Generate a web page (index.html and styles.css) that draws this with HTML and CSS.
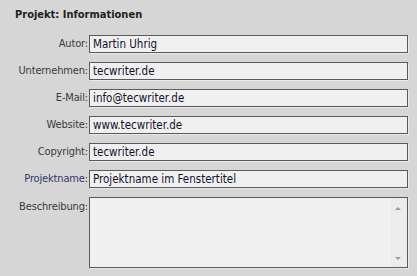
FILE: index.html
```html
<!DOCTYPE html>
<html>
<head>
  <title>Projekt: Informationen</title>
  <meta charset="UTF-8" />
  <meta name="viewport" content="width=device-width, initial-scale=1.0" />
  <link rel="stylesheet" href="styles.css">
</head>
<body>

  <div class="panel">
    <h1 class="title">Projekt: Informationen</h1>

    <!-- Project info fields -->
    <div class="fields">
      <label for="autor">Autor:</label>
      <input type="text" id="autor" value="Martin Uhrig">

      <label for="firma">Unternehmen:</label>
      <input type="text" id="firma" value="tecwriter.de">

      <label for="mail">E-Mail:</label>
      <input type="text" id="mail" value="info@tecwriter.de">

      <label for="web">Website:</label>
      <input type="text" id="web" value="www.tecwriter.de">

      <label for="copy">Copyright:</label>
      <input type="text" id="copy" value="tecwriter.de">

      <label for="pname" class="link">Projektname:</label>
      <input type="text" id="pname" value="Projektname im Fenstertitel">

      <label for="desc" class="top">Beschreibung:</label>
      <div class="area">
        <textarea id="desc"></textarea>
        <!-- fake scrollbar like the old windows one -->
        <div class="scroll">
          <span class="arrow up"></span>
          <span class="arrow down"></span>
        </div>
      </div>
    </div>
  </div>

</body>
</html>
```

FILE: styles.css
```css
html, body {
  margin: 0;
  background: #d6d6d6;
}
.panel {
  width: 417px;
  height: 276px;
  box-sizing: border-box;
  padding: 8px 0 0 0;
  font-family: 'DejaVu Sans Condensed', 'DejaVu Sans', sans-serif;
  font-stretch: condensed;
  font-size: 11px;
}
.title {
  margin: 0 0 13px 15px;
  font-size: 11px;
  line-height: 14px;
  font-weight: bold;
  color: #222;
}
.fields {
  display: grid;
  grid-template-columns: 88px 319px;
  column-gap: 1px;
  row-gap: 9px;
  align-items: center;
}
.fields label {
  text-align: right;
  color: #3a3a3a;
  line-height: 18px;
  letter-spacing: -0.15px;
}
.fields label.link {
  color: #33386a;
}
.fields label.top {
  align-self: start;
  line-height: 14px;
  margin-top: 3px;
}
input, textarea {
  height: 18px;
  margin: 0;
  padding: 0 3px;
  border: 1px solid #5a5a5a;
  border-radius: 0;
  background: #f0f0f0;
  box-sizing: border-box;
  box-shadow: 1px 1px 0 #e9e9e9;
  font-family: 'DejaVu Sans Condensed', 'DejaVu Sans', sans-serif;
  font-stretch: condensed;
  font-size: 11.5px;
  color: #10102a;
  outline: none;
}
.area {
  position: relative;
  height: 71px;
}
textarea {
  display: block;
  width: 100%;
  height: 71px;
  resize: none;
  overflow: hidden;
}
.scroll {
  position: absolute;
  top: 1px;
  right: 1px;
  bottom: 1px;
  width: 17px;
  background: #ececec;
  border-left: 1px solid #f6f6f6;
}
.arrow {
  position: absolute;
  left: 5px;
  width: 0;
  height: 0;
  border-left: 3px solid transparent;
  border-right: 3px solid transparent;
}
.arrow.up {
  top: 9px;
  border-bottom: 3px solid #9a9a9a;
}
.arrow.down {
  bottom: 7px;
  border-top: 3px solid #9a9a9a;
}
```
